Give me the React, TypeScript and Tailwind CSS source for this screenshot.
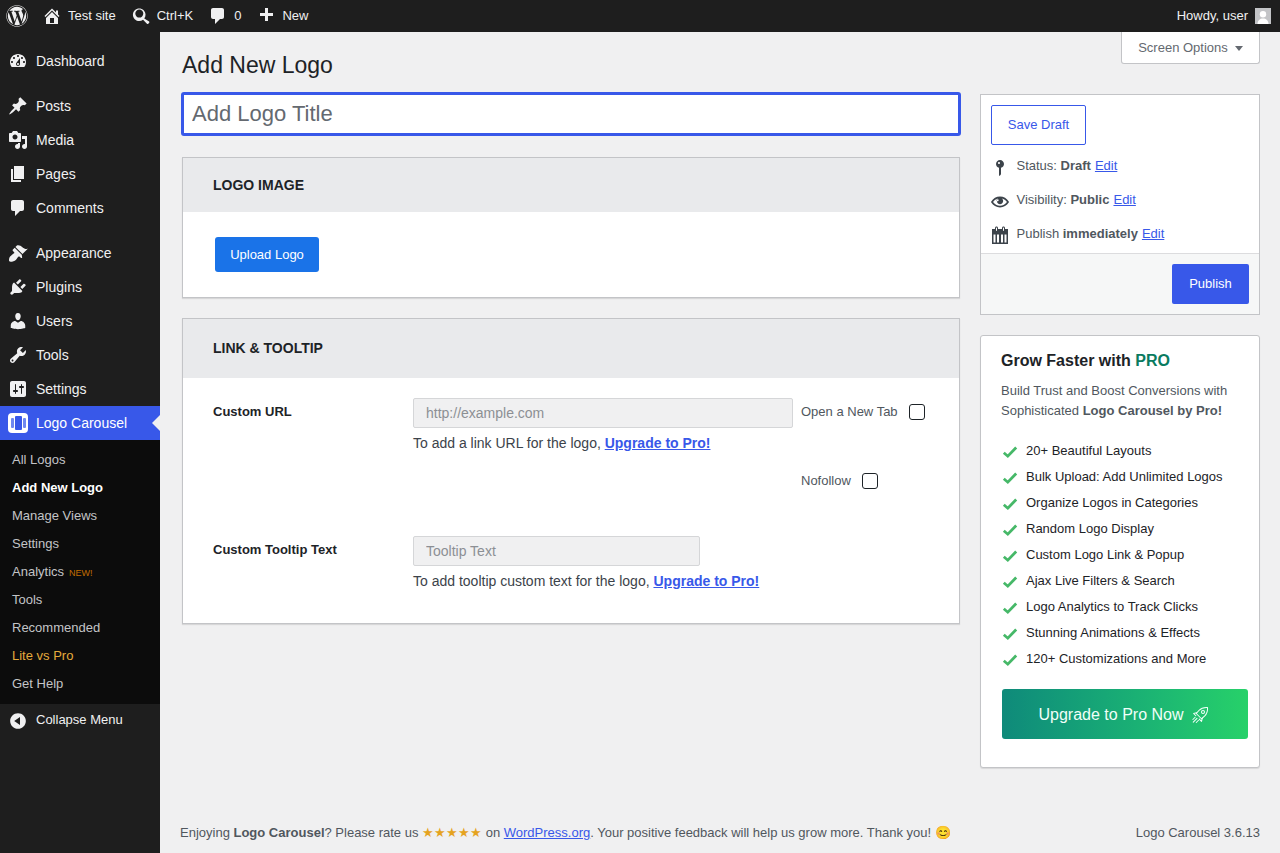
import { FaWordpress } from "react-icons/fa";

const paths: Record<string, string> = {
  dashboard: "M3.76 16h12.48c1.1-1.37 1.76-3.11 1.76-5 0-4.42-3.58-8-8-8s-8 3.58-8 8c0 1.89.66 3.63 1.76 5zM10 4c.55 0 1 .45 1 1s-.45 1-1 1-1-.45-1-1 .45-1 1-1zM6 6c.55 0 1 .45 1 1s-.45 1-1 1-1-.45-1-1 .45-1 1-1zm8 0c.55 0 1 .45 1 1s-.45 1-1 1-1-.45-1-1 .45-1 1-1zm-5.37 5.55L12 7v6c0 1.1-.9 2-2 2s-2-.9-2-2c0-.57.24-1.08.63-1.45zM4 10c.55 0 1 .45 1 1s-.45 1-1 1-1-.45-1-1 .45-1 1-1zm12 0c.55 0 1 .45 1 1s-.45 1-1 1-1-.45-1-1 .45-1 1-1zm-5 3c0-.55-.45-1-1-1s-1 .45-1 1 .45 1 1 1 1-.45 1-1z",
  pin: "M10.44 3.02l1.82-1.82 6.36 6.35-1.83 1.82c-1.05-.68-2.48-.57-3.41.36l-.75.75c-.92.93-1.04 2.35-.35 3.41l-1.83 1.82-2.41-2.41-2.8 2.79c-.42.42-3.38 2.71-3.8 2.29s1.86-3.39 2.28-3.81l2.79-2.79L4.1 9.36l1.83-1.82c1.05.69 2.48.57 3.4-.36l.75-.75c.93-.92 1.05-2.35.36-3.41z",
  media: "M13 11V4c0-.55-.45-1-1-1h-1.67L9 1H5L3.67 3H2c-.55 0-1 .45-1 1v7c0 .55.45 1 1 1h10c.55 0 1-.45 1-1zM7 4.500c1.38 0 2.500 1.120 2.500 2.500S8.380 9.500 7 9.500 4.500 8.380 4.500 7 5.620 4.500 7 4.500zM14 6h5v10.500c0 1.380-1.120 2.500-2.500 2.500S14 17.880 14 16.500s1.120-2.500 2.500-2.500c.17 0 .34.02.5.05V9h-3V6zm-4 8.050V13h2v3.500c0 1.380-1.120 2.500-2.500 2.500S7 17.880 7 16.500 8.120 14 9.500 14c.17 0 .34.02.5.05z",
  page: "M6 15V2h10v13H6zm-1 1h8v2H3V5h2v11z",
  comments: "M5 2h9c1.1 0 2 .9 2 2v7c0 1.1-.9 2-2 2h-2l-5 5v-5H5c-1.1 0-2-.9-2-2V4c0-1.1.9-2 2-2z",
  appearance: "M14.48 11.06L7.41 3.99l1.5-1.5c.5-.56 2.3-.47 3.51.32 1.21.8 1.43 1.28 2.91 2.1 1.18.64 2.45 1.26 4.45.85zm-.71.71L6.7 4.7 4.93 6.47c-.39.39-.39 1.02 0 1.41l1.06 1.06c.39.39.39 1.03 0 1.42-.6.6-1.43 1.11-2.21 1.69-.35.26-.7.53-1.01.84C1.43 13.23.4 17.4 1.33 18.33c.93.93 5.1-.1 6.44-1.44.31-.31.58-.66.84-1.01.58-.78 1.09-1.61 1.69-2.21.39-.39 1.03-.39 1.42 0l1.06 1.06c.39.39 1.02.39 1.41 0z",
  plugins: "M13.11 4.36L9.87 7.6 8 5.73l3.24-3.24c.35-.34 1.05-.2 1.56.32.52.51.66 1.21.31 1.55zm-8 1.77l.91-.52 8.37 8.37-.52.91c-.71.71-2.63 1.16-3.82 1.16H6.14L4.9 17.29c-.59.59-1.54.59-2.12 0-.59-.58-.59-1.53 0-2.12l1.24-1.24v-3.88c0-1.13.4-3.21 1.09-3.92zm7.26 3.97l3.24-3.24c.34-.35 1.04-.21 1.55.31.52.51.66 1.21.31 1.55l-3.24 3.25z",
  users: "M10 9.25c-2.27 0-2.73-3.44-2.73-3.44C7 4.02 7.82 2 9.97 2c2.16 0 2.98 2.02 2.71 3.81 0 0-.41 3.44-2.68 3.44zm0 2.57L12.72 10c2.39 0 4.52 2.33 4.52 4.53v2.49s-3.65 1.13-7.24 1.13c-3.65 0-7.24-1.13-7.24-1.13v-2.49c0-2.25 1.94-4.48 4.47-4.48z",
  tools: "M16.68 9.77c-1.34 1.34-3.3 1.67-4.95.99l-5.41 6.52c-.99.99-2.59.99-3.58 0s-.99-2.59 0-3.57l6.52-5.42c-.68-1.65-.35-3.61.99-4.95 1.28-1.28 3.12-1.62 4.72-1.06l-2.89 2.89 2.82 2.82 2.86-2.87c.53 1.58.18 3.39-1.08 4.65zM3.81 16.21c.4.39 1.04.39 1.43 0 .4-.4.4-1.04 0-1.43-.39-.4-1.03-.4-1.43 0-.39.39-.39 1.03 0 1.43z",
  settings: "M18 16V4c0-1.1-.9-2-2-2H4c-1.1 0-2 .9-2 2v12c0 1.1.9 2 2 2h12c1.1 0 2-.9 2-2zM8 11h1c.55 0 1 .45 1 1s-.45 1-1 1H8v1.5c0 .28-.22.5-.5.5s-.5-.22-.5-.5V13H6c-.55 0-1-.45-1-1s.45-1 1-1h1V5.5c0-.28.22-.5.5-.5s.5.22.5.5V11zm5-2h-1c-.55 0-1-.45-1-1s.45-1 1-1h1V5.5c0-.28.22-.5.5-.5s.5.22.5.5V7h1c.55 0 1 .45 1 1s-.45 1-1 1h-1v5.5c0 .28-.22.5-.5.5s-.5-.22-.5-.5V9z",
  home: "M16 8.5l1.53 1.53-1.06 1.06L10 4.62l-6.47 6.47-1.06-1.06L10 2.5l4 4v-2h2v4zm-6-2.46l6 5.99V18H4v-5.97zM12 17v-5H8v5h4z",
  collapse: "M10 2.16c4.33 0 7.84 3.51 7.84 7.84s-3.51 7.84-7.84 7.84S2.16 14.33 2.16 10 5.67 2.16 10 2.16zm2 11.72V6.12L6.18 9.97z",
  plus: "M17 7v3h-5v5H9v-5H4V7h5V2h3v5h5z",
  search: "M12.14 4.78c1.56 1.56 1.56 4.09 0 5.65-1.56 1.56-4.09 1.56-5.65 0-1.56-1.56-1.56-4.09 0-5.65 1.56-1.56 4.09-1.56 5.65 0zm2.12 7.78c1.88-2.44 1.7-5.98-.58-8.26-2.46-2.46-6.44-2.46-8.9 0-2.46 2.46-2.46 6.44 0 8.9 2.28 2.28 5.82 2.46 8.26.58l3.9 3.9c.38.38 1 .38 1.38 0l.84-.84c.38-.38.38-1 0-1.38z",
  status: "M14 6c0 1.86-1.28 3.41-3 3.86V16c0 1-2 2-2 2V9.86c-1.72-.45-3-2-3-3.86 0-2.21 1.79-4 4-4s4 1.79 4 4zM8 5c0 .55.45 1 1 1s1-.45 1-1-.45-1-1-1-1 .45-1 1z",
  eye: "M19.7 9.4C17.7 6 14 3.9 10 3.9S2.3 6 .3 9.4L0 10l.3.6c2 3.4 5.7 5.5 9.700 5.500s7.700-2.100 9.700-5.500l.3-.6-.3-.6zM10 14.100c-3.100 0-6-1.600-7.700-4.100C3.600 8 5.700 6.600 8 6.100c-.9.6-1.500 1.700-1.500 2.900 0 1.900 1.600 3.500 3.500 3.500s3.500-1.600 3.500-3.500c0-1.200-.6-2.300-1.500-2.900 2.300.5 4.400 1.900 5.700 3.900-1.700 2.500-4.600 4.100-7.700 4.100zM8.500 8a1.200 1.200 0 1 0 0 .01z",
  calendar: "M15 4h3v15H2V4h3V3c0-.41.15-.76.44-1.06.29-.29.65-.44 1.06-.44s.77.15 1.06.44c.29.3.44.65.44 1.06v1h4V3c0-.41.15-.76.44-1.06.29-.29.65-.44 1.06-.44s.77.15 1.06.44c.29.3.44.65.44 1.06v1zM6 3v2.5c0 .28.22.5.5.5s.5-.22.5-.5V3c0-.28-.22-.5-.5-.5S6 2.72 6 3zm7 0v2.5c0 .28.22.5.5.5s.5-.22.5-.5V3c0-.28-.22-.5-.5-.5s-.5.22-.5.5zM3.500 9.500V17.500h2V9.500zm3.500 0V17.500h2V9.500zm4 0V17.500h2V9.500zm3.500 0V17.500h2V9.500z",
};

function Dash({ name, className }: { name: string; className: string }) {
  return (
    <svg viewBox="0 0 20 20" className={className} fill="currentColor" fillRule="evenodd" clipRule="evenodd">
      <path d={paths[name]} />
    </svg>
  );
}

function MenuItem({ icon, label }: { icon: string; label: string }) {
  return (
    <div className="flex h-[34px] items-center gap-2 pl-2 text-[14px] text-[#f0f0f1]">
      <Dash name={icon} className="h-5 w-5 shrink-0 text-[#f0f0f1]" />
      <span>{label}</span>
    </div>
  );
}

function SubItem({ label, className = "text-[#c3c4c7]" }: { label: string; className?: string }) {
  return <div className={`flex h-7 items-center pl-3 text-[13px] ${className}`}>{label}</div>;
}

function TopItem({ icon, label, className }: { icon: string; label: string; className: string }) {
  return (
    <div className={`flex items-center ${className}`}>
      <Dash name={icon} className="h-5 w-5 shrink-0 text-[#f0f0f1]" />
      <span>{label}</span>
    </div>
  );
}

function Sidebar() {
  return (
    <aside className="flex w-40 shrink-0 flex-col bg-[#1e1e1e] pt-3">
      <MenuItem icon="dashboard" label="Dashboard" />
      <div className="mt-[11px]">
        <MenuItem icon="pin" label="Posts" />
        <MenuItem icon="media" label="Media" />
        <MenuItem icon="page" label="Pages" />
        <MenuItem icon="comments" label="Comments" />
      </div>
      <div className="mt-[11px]">
        <MenuItem icon="appearance" label="Appearance" />
        <MenuItem icon="plugins" label="Plugins" />
        <MenuItem icon="users" label="Users" />
        <MenuItem icon="tools" label="Tools" />
        <MenuItem icon="settings" label="Settings" />
      </div>
      <div className="relative flex h-[34px] items-center gap-2 bg-[#3858e9] pl-2 text-[14px] text-white">
        <div className="flex h-5 w-5 items-center justify-center gap-[1px] rounded-[4px] bg-white">
          <span className="h-[10px] w-[3px] rounded-[1px] bg-[#6f88f0]" />
          <span className="h-[14px] w-[7px] rounded-[1px] bg-[#3858e9]" />
          <span className="h-[10px] w-[3px] rounded-[1px] bg-[#6f88f0]" />
        </div>
        <span>Logo Carousel</span>
        <span className="absolute right-0 top-[9px] h-0 w-0 border-y-[8px] border-r-[8px] border-y-transparent border-r-[#f0f0f1]" />
      </div>
      <div className="bg-[#0c0c0c] pb-[6px] pt-[6px]">
        <SubItem label="All Logos" />
        <SubItem label="Add New Logo" className="font-bold text-white" />
        <SubItem label="Manage Views" />
        <SubItem label="Settings" />
        <div className="flex h-7 items-center pl-3 text-[13px] text-[#c3c4c7]">
          Analytics
          <span className="ml-[5px] mt-[3px] text-[9px] text-[#c26c00]">NEW!</span>
        </div>
        <SubItem label="Tools" />
        <SubItem label="Recommended" />
        <SubItem label="Lite vs Pro" className="text-[#e5ab3c]" />
        <SubItem label="Get Help" />
      </div>
      <div className="flex h-[34px] items-start gap-2 pl-2 pt-[6px] text-[13px] text-[#f0f0f1]">
        <Dash name="collapse" className="mt-[1px] h-5 w-5 shrink-0" />
        <span>Collapse Menu</span>
      </div>
    </aside>
  );
}

function Publish() {
  const row = "flex items-center h-[34px] text-[13px] text-[#50575e]";
  const edit = "ml-1 text-[#3858e9] underline";
  return (
    <div className="border border-[#c3c4c7] bg-white">
      <div className="px-[10px] pt-[10px]">
        <div className="flex h-10 w-[95px] items-center justify-center rounded-[2px] border border-[#3858e9] text-[13px] text-[#3858e9]">
          Save Draft
        </div>
      </div>
      <div className="mt-1 pb-[2px] pl-[9px]">
        <div className={row}>
          <Dash name="status" className="mt-[3px] h-5 w-5 shrink-0 text-[#3c434a]" />
          <span className="ml-[6.5px]">Status: <b>Draft</b><span className={edit}>Edit</span></span>
        </div>
        <div className={row}>
          <Dash name="eye" className="ml-[1px] mr-[1px] mt-[3px] h-[18px] w-[18px] shrink-0 text-[#3c434a]" />
          <span className="ml-[6.5px]">Visibility: <b>Public</b><span className={edit}>Edit</span></span>
        </div>
        <div className={row}>
          <Dash name="calendar" className="mt-[1px] h-5 w-5 shrink-0 text-[#3c434a]" />
          <span className="ml-[6.5px]">Publish <b>immediately</b><span className={edit}>Edit</span></span>
        </div>
      </div>
      <div className="flex justify-end border-t border-[#dcdcde] bg-[#f6f7f7] px-[10px] py-[10px]">
        <div className="flex h-10 w-[77px] items-center justify-center rounded-[2px] bg-[#3858e9] text-[13px] text-white">
          Publish
        </div>
      </div>
    </div>
  );
}

const features = [
  "20+ Beautiful Layouts",
  "Bulk Upload: Add Unlimited Logos",
  "Organize Logos in Categories",
  "Random Logo Display",
  "Custom Logo Link & Popup",
  "Ajax Live Filters & Search",
  "Logo Analytics to Track Clicks",
  "Stunning Animations & Effects",
  "120+ Customizations and More",
];

function RocketIcon() {
  return (
    <svg viewBox="0 0 24 24" className="h-[18px] w-[18px]" fill="none" stroke="currentColor" strokeWidth="1.4" strokeLinecap="round" strokeLinejoin="round">
      <path d="M22 2c-4.500-.5-8.500 1-11.500 4L7 10l7 7 4-3.500C21 10.500 22.500 6.500 22 2z" />
      <circle cx="16" cy="8" r="2" />
      <path d="M7.500 9L3.500 10l3 3M15 16.500L14 20.500l-3-3" />
      <path d="M8 16.500L3 21.500M5.500 15L2.500 18M10 19L7 22" />
    </svg>
  );
}

function ProCard() {
  return (
    <div className="mt-5 h-[433px] rounded-[3px] border border-[#c3c4c7] bg-white pl-5 pr-[11px] pt-[14px] shadow-[0_1px_1px_rgba(0,0,0,0.1)]">
      <h3 className="text-[16px] font-bold leading-[22px] text-[#1d2327]">
        Grow Faster with <span className="text-[#0a7b60]">PRO</span>
      </h3>
      <p className="mt-[9px] text-[13px] leading-5 text-[#50575e]">
        Build Trust and Boost Conversions with Sophisticated <b>Logo Carousel by Pro!</b>
      </p>
      <ul className="mt-[17px]">
        {features.map((f) => (
          <li key={f} className="flex h-[26px] items-center gap-2 pl-[1px] text-[13px] text-[#1d2327]">
            <svg viewBox="0 0 16 16" className="mt-[2px] h-4 w-4 shrink-0" fill="none" stroke="#46b868" strokeWidth="2.8">
              <path d="M1.800 8.800L5.800 12.200 14.200 3.600" />
            </svg>
            {f}
          </li>
        ))}
      </ul>
      <div className="ml-[1px] mt-[17px] flex h-[50px] w-[246px] items-center justify-center gap-2 rounded-[3px] bg-gradient-to-r from-[#0f8a7a] to-[#27d169] pr-[2px] pt-[1px] text-[16px] text-[#f0fff8]">
        Upgrade to Pro Now
        <RocketIcon />
      </div>
    </div>
  );
}

function LogoImageBox() {
  return (
    <section className="mt-[21px] border border-[#c3c4c7] bg-white shadow-[0_1px_1px_rgba(0,0,0,0.1)]">
      <div className="flex h-[54px] items-center bg-[#e9eaec] pl-[30px] text-[14px] font-bold text-[#1d2327]">LOGO IMAGE</div>
      <div className="h-[85px] pl-[32px] pt-[25px]">
        <div className="flex h-[35px] w-[104px] items-center justify-center rounded-[3px] bg-[#1a73e8] text-[13px] text-white">
          Upload Logo
        </div>
      </div>
    </section>
  );
}

function LinkBox() {
  const inputCls = "h-[30px] rounded-[2px] border border-[#d5d6d8] bg-[#f0f0f1] px-3 text-[14px] outline-none placeholder:text-[#8c8f94]";
  const help = "mt-[6px] text-[14px] leading-[18px] text-[#3c434a]";
  const box = "h-4 w-4 rounded-[3px] border border-[#1d2327] bg-white";
  const up = "font-bold text-[#3858e9] underline";
  return (
    <section className="mt-5 border border-[#c3c4c7] bg-white shadow-[0_1px_1px_rgba(0,0,0,0.1)]">
      <div className="flex h-[59px] items-center bg-[#e9eaec] pl-[30px] text-[14px] font-bold text-[#1d2327]">LINK &amp; TOOLTIP</div>
      <div className="h-[245px] pl-[30px] pt-5">
        <div className="flex">
          <div className="w-[200px] pt-[6px] text-[13px] font-bold leading-4 text-[#1d2327]">Custom URL</div>
          <div>
            <div className="flex items-center">
              <input disabled placeholder="http://example.com" className={`w-[380px] ${inputCls}`} />
              <span className="ml-2 mt-[-2px] text-[13px] text-[#50575e]">Open a New Tab</span>
              <span className={`ml-[11px] mt-[-3px] ${box}`} />
            </div>
            <div className={help}>
              To add a link URL for the logo, <span className={up}>Upgrade to Pro!</span>
            </div>
            <div className="ml-[388px] mt-[19px] flex items-center">
              <span className="text-[13px] text-[#50575e]">Nofollow</span>
              <span className={`ml-[11px] ${box}`} />
            </div>
          </div>
        </div>
        <div className="mt-[45px] flex">
          <div className="w-[200px] pt-[6px] text-[13px] font-bold leading-4 text-[#1d2327]">Custom Tooltip Text</div>
          <div>
            <input disabled placeholder="Tooltip Text" className={`block w-[287px] ${inputCls}`} />
            <div className={help}>
              To add tooltip custom text for the logo, <span className={up}>Upgrade to Pro!</span>
            </div>
          </div>
        </div>
      </div>
    </section>
  );
}

export default function App() {
  return (
    <div className="flex h-[853px] flex-col overflow-hidden bg-[#f0f0f1] font-['Liberation_Sans',Arial,sans-serif]">
      <header className="flex h-8 shrink-0 items-center bg-[#1e1e1e] text-[13px] text-[#f0f0f1]">
        <FaWordpress className="ml-[6px] h-[22px] w-[22px] text-[#f0f0f1]" />
        <TopItem icon="home" label="Test site" className="ml-[14px] gap-[6px]" />
        <TopItem icon="search" label="Ctrl+K" className="ml-[14px] gap-[7px]" />
        <TopItem icon="comments" label="0" className="ml-[15px] gap-[6px]" />
        <TopItem icon="plus" label="New" className="ml-[15px] gap-[6px]" />
        <span className="ml-auto">Howdy, user</span>
        <div className="ml-[7px] mr-[9px] flex h-4 w-4 items-end justify-center overflow-hidden bg-[#c3c4c7]">
          <svg viewBox="0 0 16 16" className="h-4 w-4" fill="#fff">
            <circle cx="8" cy="6.2" r="3.2" />
            <path d="M2.500 16c0-3.500 2.500-5.500 5.500-5.500s5.500 2 5.500 5.500z" />
          </svg>
        </div>
      </header>
      <div className="flex min-h-0 flex-1">
        <Sidebar />
        <main className="flex min-w-0 flex-1 flex-col px-5">
          <div className="flex h-[60px] items-start justify-between pl-[2px]">
            <h1 className="mt-[19px] text-[23px] leading-[29px] text-[#1d2327]">Add New Logo</h1>
            <div className="flex h-8 w-[139px] items-center justify-center gap-[7px] rounded-b-[3px] border border-t-0 border-[#c3c4c7] bg-white text-[13px] text-[#646970]">
              Screen Options
              <span className="mt-[2px] h-0 w-0 border-x-[4px] border-t-[5px] border-x-transparent border-t-[#646970]" />
            </div>
          </div>
          <div className="flex gap-5 pl-[2px]">
            <div className="w-[778px]">
              <input
                placeholder="Add Logo Title"
                className="-mx-[1px] block h-11 w-[780px] rounded-[3px] border-[3px] border-[#3858e9] bg-white px-2 text-[22px] text-[#1d2327] outline-none placeholder:text-[#646970]"
              />
              <LogoImageBox />
              <LinkBox />
            </div>
            <div className="mt-[2px] w-[280px]">
              <Publish />
              <ProCard />
            </div>
          </div>
          <footer className="mt-auto flex h-[30px] items-start justify-between text-[13px] text-[#50575e]">
            <span>
              Enjoying <b>Logo Carousel</b>? Please rate us <span className="text-[#e5a31f]">★★★★★</span> on{" "}
              <span className="text-[#3858e9] underline">WordPress.org</span>. Your positive feedback will help us grow more. Thank you! 😊
            </span>
            <span>Logo Carousel 3.6.13</span>
          </footer>
        </main>
      </div>
    </div>
  );
}
